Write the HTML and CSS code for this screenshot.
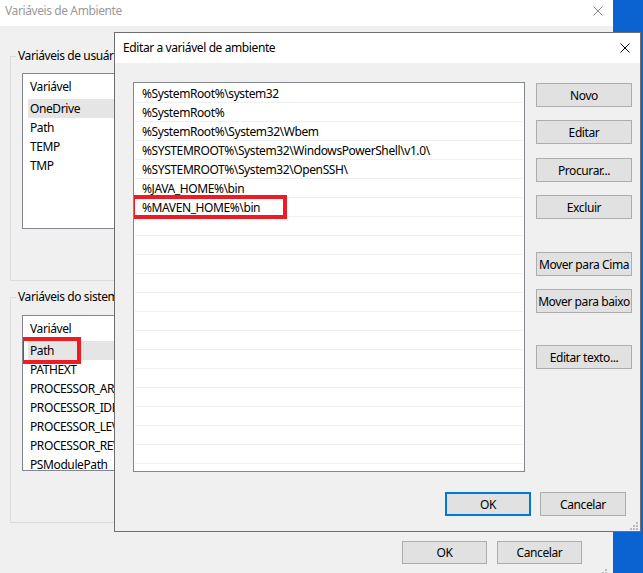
FILE: index.html
```html
<!DOCTYPE html>
<html lang="pt-BR">
<head>
<meta charset="utf-8">
<title>Variáveis de Ambiente</title>
<link rel="stylesheet" href="styles.css">
</head>
<body>
<div class="desktop">
  <div class="window outer">
    <div class="titlebar outer-title">
      <span class="title-text">Variáveis de Ambiente</span>
      <svg class="close-icon" width="10" height="10" viewBox="0 0 10 10"><path d="M0.5 0.5 L9.5 9.5 M9.5 0.5 L0.5 9.5" stroke="#8c8c8c" stroke-width="1" fill="none"/></svg>
    </div>
    <div class="outer-body">
      <fieldset class="group group-user">
        <legend><span class="legend-text">Variáveis de usuário para Usuario</span></legend>
        <div class="listview">
          <div class="lv-header">Variável</div>
          <div class="lv-row selected">OneDrive</div>
          <div class="lv-row">Path</div>
          <div class="lv-row">TEMP</div>
          <div class="lv-row">TMP</div>
        </div>
      </fieldset>
      <fieldset class="group group-system">
        <legend><span class="legend-text">Variáveis do sistema</span></legend>
        <div class="listview">
          <div class="lv-header">Variável</div>
          <div class="lv-row selected marked">Path<span class="mark mark-path"></span></div>
          <div class="lv-row">PATHEXT</div>
          <div class="lv-row">PROCESSOR_ARCHITECTURE</div>
          <div class="lv-row">PROCESSOR_IDENTIFIER</div>
          <div class="lv-row">PROCESSOR_LEVEL</div>
          <div class="lv-row">PROCESSOR_REVISION</div>
          <div class="lv-row">PSModulePath</div>
        </div>
      </fieldset>
      <div class="outer-footer">
        <button class="btn btn-outer">OK</button>
        <button class="btn btn-outer">Cancelar</button>
      </div>
    </div>
    <svg class="grip grip-outer" width="8" height="8" viewBox="0 0 8 8"><g fill="#bcbcbc"><rect x="6" y="0" width="2" height="2"/><rect x="3" y="3" width="2" height="2"/><rect x="6" y="3" width="2" height="2"/><rect x="0" y="6" width="2" height="2"/><rect x="3" y="6" width="2" height="2"/><rect x="6" y="6" width="2" height="2"/></g></svg>
  </div>

  <div class="window dialog">
    <div class="titlebar dialog-title">
      <span class="title-text">Editar a variável de ambiente</span>
      <svg class="close-icon" width="10" height="10" viewBox="0 0 10 10"><path d="M0.5 0.5 L9.5 9.5 M9.5 0.5 L0.5 9.5" stroke="#000" stroke-width="1" fill="none"/></svg>
    </div>
    <div class="dialog-body">
      <div class="dialog-main">
        <div class="pathlist">
          <div class="pl-row">%SystemRoot%\system32</div>
          <div class="pl-row">%SystemRoot%</div>
          <div class="pl-row">%SystemRoot%\System32\Wbem</div>
          <div class="pl-row">%SYSTEMROOT%\System32\WindowsPowerShell\v1.0\</div>
          <div class="pl-row">%SYSTEMROOT%\System32\OpenSSH\</div>
          <div class="pl-row">%JAVA_HOME%\bin</div>
          <div class="pl-row marked">%MAVEN_HOME%\bin<span class="mark mark-maven"></span></div>
          <div class="pl-row"></div><div class="pl-row"></div><div class="pl-row"></div>
          <div class="pl-row"></div><div class="pl-row"></div><div class="pl-row"></div>
          <div class="pl-row"></div><div class="pl-row"></div><div class="pl-row"></div>
          <div class="pl-row"></div><div class="pl-row"></div><div class="pl-row"></div>
          <div class="pl-row"></div><div class="pl-row"></div>
        </div>
        <div class="side-buttons">
          <button class="btn btn-side b-novo">Novo</button>
          <button class="btn btn-side b-editar">Editar</button>
          <button class="btn btn-side b-procurar">Procurar...</button>
          <button class="btn btn-side b-excluir">Excluir</button>
          <button class="btn btn-side b-cima">Mover para Cima</button>
          <button class="btn btn-side b-baixo">Mover para baixo</button>
          <button class="btn btn-side b-texto">Editar texto...</button>
        </div>
      </div>
      <div class="dialog-footer">
        <button class="btn btn-footer btn-default">OK</button>
        <button class="btn btn-footer">Cancelar</button>
      </div>
    </div>
    <svg class="grip grip-dialog" width="8" height="8" viewBox="0 0 8 8"><g fill="#bcbcbc"><rect x="6" y="0" width="2" height="2"/><rect x="3" y="3" width="2" height="2"/><rect x="6" y="3" width="2" height="2"/><rect x="0" y="6" width="2" height="2"/><rect x="3" y="6" width="2" height="2"/><rect x="6" y="6" width="2" height="2"/></g></svg>
  </div>
</div>
</body>
</html>
```

FILE: styles.css
```css
* { box-sizing: border-box; }
html, body { margin: 0; padding: 0; }
body {
  width: 643px;
  height: 573px;
  overflow: hidden;
  background: #0a63d0;
  font-family: "Noto Sans", "Segoe UI", sans-serif;
  font-size: 12px;
  letter-spacing: -0.4px;
  color: #000;
}
.desktop { position: relative; width: 643px; height: 573px; overflow: hidden; }

.window { background: #f0f0f0; }
.titlebar { display: flex; justify-content: space-between; background: #fff; }
.title-text { line-height: 16px; white-space: nowrap; }

/* outer window */
.outer { position: relative; width: 613px; height: 573px; }
.outer-title { height: 26px; align-items: flex-start; padding: 3px 10px 0 5px; color: #999; }
.outer-title .close-icon { margin-top: 3px; }
.outer-body { padding: 22px 10px 0 10px; }

.group {
  margin: 0;
  border: 1px solid #dcdcdc;
  min-width: 0;
  width: 593px;
  padding: 9px 0 51px 11px;
}
.group legend {
  padding: 0 2px;
  margin-left: -6px;
  line-height: 16px;
  white-space: nowrap;
}
.legend-text {
  display: block;
  max-width: 96px;
  overflow: hidden;
}
.group-system { margin-top: 8px; padding-top: 10px; }

.listview {
  height: 156px;
  width: 580px;
  background: #fff;
  border: 1px solid #828790;
  overflow: hidden;
}
.lv-header { height: 25px; line-height: 25px; padding-left: 7px; }
.lv-row {
  position: relative;
  height: 19px;
  line-height: 19px;
  margin-left: 5px;
  padding-left: 2px;
  white-space: nowrap;
}
.lv-row.selected { background: #e5e5e5; }

.outer-footer {
  display: flex;
  justify-content: flex-end;
  gap: 10px;
  margin-top: 18px;
  padding-right: 21px;
}

/* buttons */
.btn {
  font-family: inherit;
  font-size: 12px;
  letter-spacing: -0.4px;
  color: #000;
  background: #e1e1e1;
  border: 1px solid #adadad;
  border-radius: 0;
  padding: 0;
  margin: 0;
  white-space: nowrap;
  text-align: center;
}
.btn-outer { width: 85px; height: 23px; }

/* dialog */
.dialog {
  position: absolute;
  left: 114px;
  top: 32px;
  width: 527px;
  height: 500px;
  border: 1px solid #6e6e6e;
}
.dialog-title { height: 30px; align-items: center; padding: 0 10px 0 8px; }
.dialog-body { padding: 19px 8px 15px 18px; }
.dialog-main { display: flex; gap: 11px; align-items: flex-start; }

.pathlist {
  width: 392px;
  height: 390px;
  background: #fff;
  border: 1px solid #828790;
  padding-top: 1px;
  overflow: hidden;
}
.pl-row {
  position: relative;
  height: 19px;
  margin: 0 1px;
  padding: 1px 0 0 7px;
  line-height: 17px;
  border-bottom: 1px solid #f0f0f0;
  white-space: nowrap;
}

.side-buttons { display: flex; flex-direction: column; width: 96px; }
.btn-side { width: 96px; height: 24px; }
.b-novo { margin-top: 1px; }
.b-editar { margin-top: 13px; }
.b-procurar { margin-top: 14px; }
.b-excluir { margin-top: 13px; }
.b-cima { margin-top: 33px; }
.b-baixo { margin-top: 13px; }
.b-texto { margin-top: 32px; }

.dialog-footer {
  display: flex;
  justify-content: flex-end;
  gap: 9px;
  margin-top: 20px;
  padding-right: 6px;
}
.btn-footer { width: 86px; height: 24px; }
.btn-default { border: 2px solid #0078d7; }

/* red annotation boxes */
.mark { position: absolute; border: 4px solid #ed1c24; pointer-events: none; }
.mark-path { left: -8px; top: -4px; width: 61px; height: 27px; }
.mark-maven { left: -4px; top: -3px; width: 156px; height: 24px; }

/* resize grips */
.grip { position: absolute; }
.grip-dialog { right: 2px; bottom: 1px; }
.grip-outer { right: 6px; bottom: -4px; }
```
